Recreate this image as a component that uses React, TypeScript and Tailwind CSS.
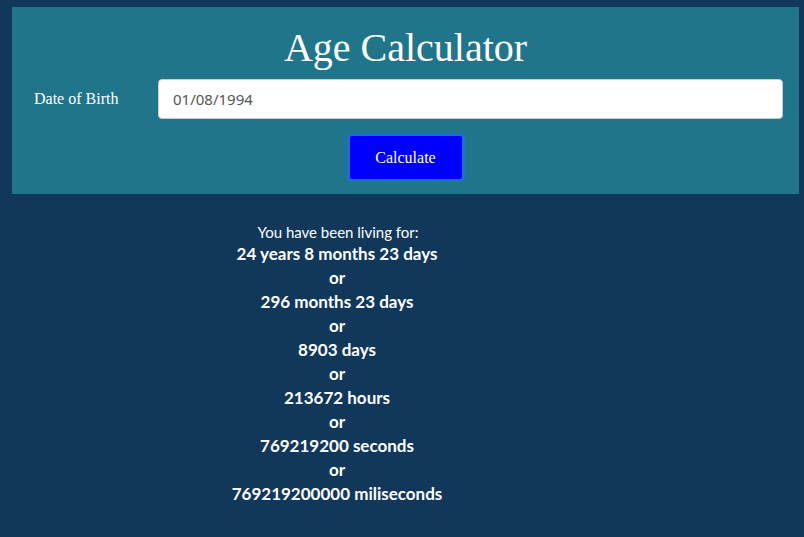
import { useState } from "react";

const results = [
  "24 years 8 months 23 days",
  "296 months 23 days",
  "8903 days",
  "213672 hours",
  "769219200 seconds",
  "769219200000 miliseconds",
];

function App() {
  const [dob, setDob] = useState("01/08/1994");

  return (
    <div className="min-h-[537px] w-full bg-[#11375a] pt-[7px] pl-3 pr-[5px]">
      <div className="bg-[#20758a] h-[187px] flex flex-col">
        <h1 className="text-center text-white leading-none pt-[21px] h-[72px] font-['Liberation_Serif',serif] text-[40px]">
          Age Calculator
        </h1>
        <div className="flex items-center h-[40px]">
          <label className="w-[146px] pl-[22px] text-white font-['Liberation_Serif',serif] text-[16px]">
            Date of Birth
          </label>
          <input
            value={dob}
            onChange={(e) => setDob(e.target.value)}
            className="flex-1 mr-[16px] h-[40px] bg-white rounded-[4px] border border-[#c8ccd0] px-[14px] text-[15px] text-[#555] font-['Noto_Sans',sans-serif] outline-none"
          />
        </div>
        <div className="flex justify-center pt-[14px]">
          <button className="w-[118px] h-[49px] bg-[#0000ff] text-white rounded-[5px] border-[3px] border-[#1a6fcf] text-[16px] font-['Liberation_Serif',serif]">
            Calculate
          </button>
        </div>
      </div>
      <div className="w-[650px] flex flex-col items-center text-white pt-[28px] font-['Lato',sans-serif]">
        <p className="text-[15px] leading-[20px] pl-[2px]">You have been living for:</p>
        {results.map((r, i) => (
          <div key={r} className="flex flex-col items-center text-[17px] leading-[24px] font-bold">
            {i > 0 && <span>or</span>}
            <span>{r}</span>
          </div>
        ))}
      </div>
    </div>
  );
}

export default App;
